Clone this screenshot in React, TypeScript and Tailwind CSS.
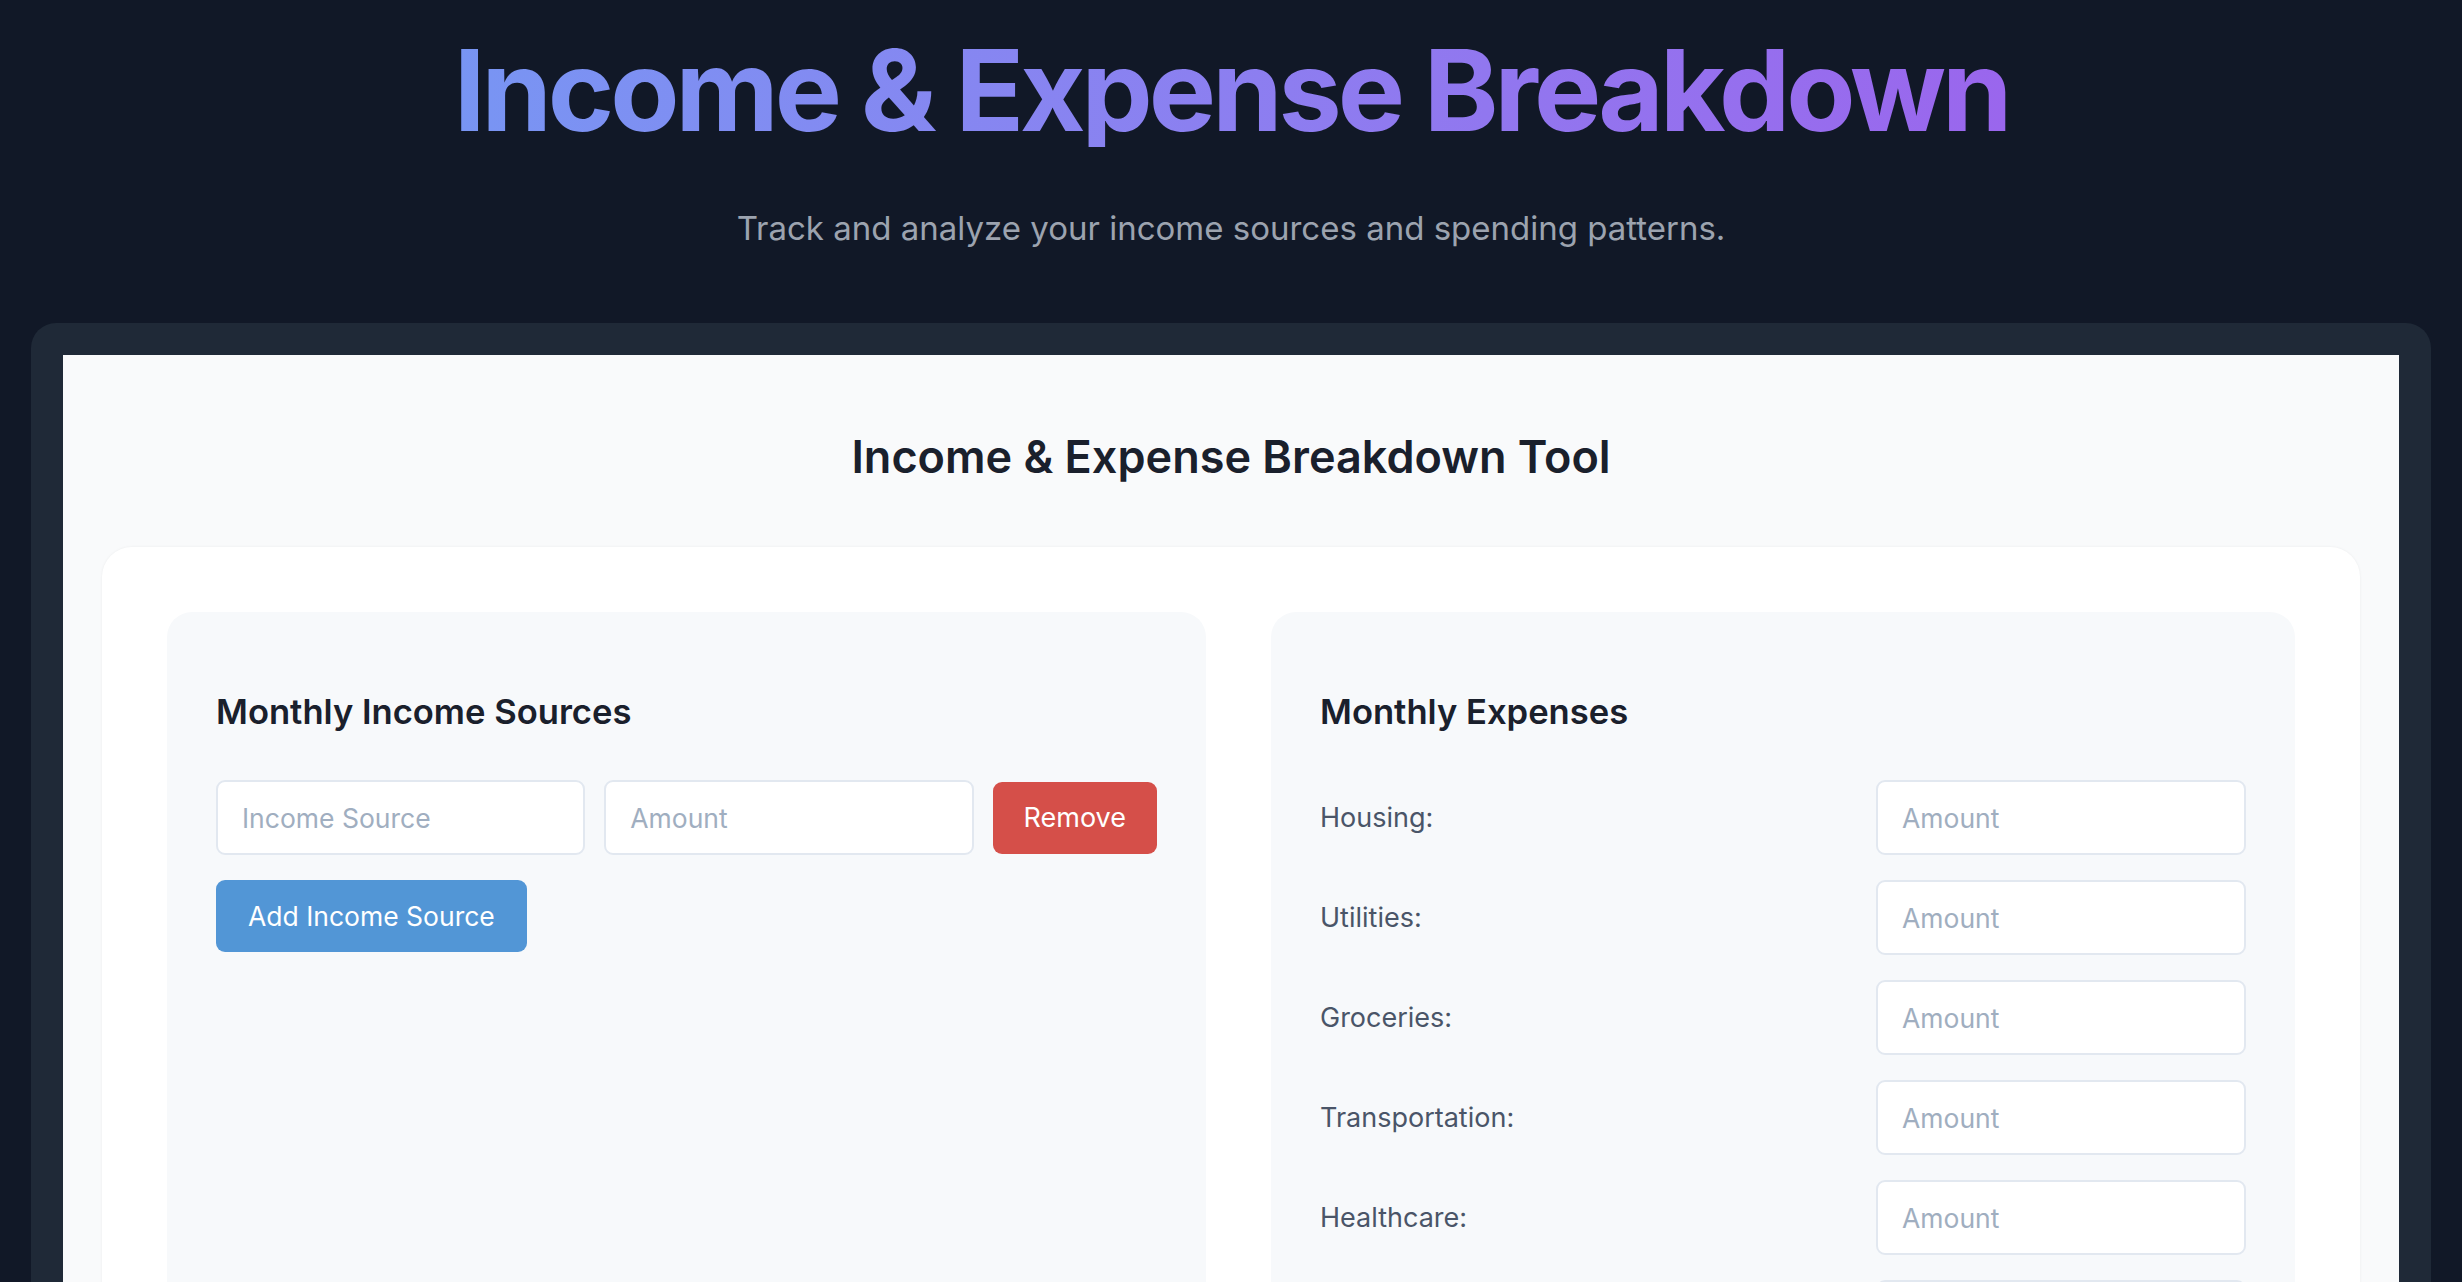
import { useState } from 'react'

interface IncomeSource {
  id: number
  name: string
  amount: string
}

const expenseCategories = [
  'Housing',
  'Utilities',
  'Groceries',
  'Transportation',
  'Healthcare',
  'Entertainment',
  'Other',
]

function IncomePanel() {
  const [sources, setSources] = useState<IncomeSource[]>([
    { id: 1, name: '', amount: '' },
  ])

  const addSource = () =>
    setSources([...sources, { id: Date.now(), name: '', amount: '' }])

  const removeSource = (id: number) =>
    setSources(sources.filter((s) => s.id !== id))

  return (
    <div className="rounded-[25px] bg-[#f7f9fb] px-[49px] pt-[77px] pb-[49px]">
      <h2 className="text-[34.6px] leading-[1.3] font-semibold text-[#1a202c]">
        Monthly Income Sources
      </h2>
      <div className="mt-[47px] flex flex-col gap-[25px]">
        {sources.map((s) => (
          <div key={s.id} className="flex items-center gap-[19px]">
            <input
              type="text"
              placeholder="Income Source"
              defaultValue={s.name}
              className="h-[75px] min-w-0 flex-1 rounded-[9px] border-2 border-[#e2e8f0] bg-white px-[24px] text-[26.5px] text-[#2d3748] outline-none placeholder:text-[#a0aec0]"
            />
            <input
              type="number"
              placeholder="Amount"
              defaultValue={s.amount}
              className="h-[75px] min-w-0 flex-1 rounded-[9px] border-2 border-[#e2e8f0] bg-white px-[24px] text-[26.5px] text-[#2d3748] outline-none placeholder:text-[#a0aec0]"
            />
            <button
              onClick={() => removeSource(s.id)}
              className="h-[72px] rounded-[9px] bg-[#d54f49] px-[31px] text-[27px] text-white"
            >
              Remove
            </button>
          </div>
        ))}
      </div>
      <button
        onClick={addSource}
        className="mt-[25px] h-[72px] rounded-[9px] bg-[#5296d6] px-[32px] text-[26.5px] text-white"
      >
        Add Income Source
      </button>
    </div>
  )
}

function ExpensePanel() {
  return (
    <div className="rounded-[25px] bg-[#f7f9fb] px-[49px] pt-[77px] pb-[49px]">
      <h2 className="text-[34.6px] leading-[1.3] font-semibold text-[#1a202c]">
        Monthly Expenses
      </h2>
      <div className="mt-[47px] flex flex-col gap-[25px]">
        {expenseCategories.map((cat) => (
          <div key={cat} className="flex items-center justify-between">
            <label className="text-[27px] text-[#4a5568]">{cat}:</label>
            <input
              type="number"
              placeholder="Amount"
              className="h-[75px] w-[370px] rounded-[9px] border-2 border-[#e2e8f0] bg-white px-[24px] text-[26.5px] text-[#2d3748] outline-none placeholder:text-[#a0aec0]"
            />
          </div>
        ))}
      </div>
    </div>
  )
}

export default function App() {
  return (
    <div className="min-h-screen bg-[#111827] pb-[32px] font-['Inter',sans-serif]">
      <header className="flex flex-col items-center pt-[34px]">
        <h1 className="inline-block bg-gradient-to-r from-[#7895f3] to-[#9a66ed] bg-clip-text text-[113px] leading-none font-bold tracking-[-4px] text-transparent">
          Income &amp; Expense Breakdown
        </h1>
        <p className="mt-[57px] text-[33px] leading-[1.5] text-[#9ca3af]">
          Track and analyze your income sources and spending patterns.
        </p>
      </header>

      <main className="mx-[31px] mt-[69px] rounded-[25px] bg-[#1f2937] p-[32px]">
        <div className="bg-[#f9fafb] px-[39px] pt-[75px] pb-[39px]">
          <h2 className="text-center text-[45px] leading-[1.2] font-semibold text-[#1a202c]">
            Income &amp; Expense Breakdown Tool
          </h2>
          <div className="mt-[63px] rounded-[30px] bg-white p-[65px] shadow-[0_0_3px_rgba(0,0,0,0.06)]">
            <div className="grid grid-cols-[1039px_1fr] gap-[65px]">
              <IncomePanel />
              <ExpensePanel />
            </div>
          </div>
        </div>
      </main>
    </div>
  )
}
